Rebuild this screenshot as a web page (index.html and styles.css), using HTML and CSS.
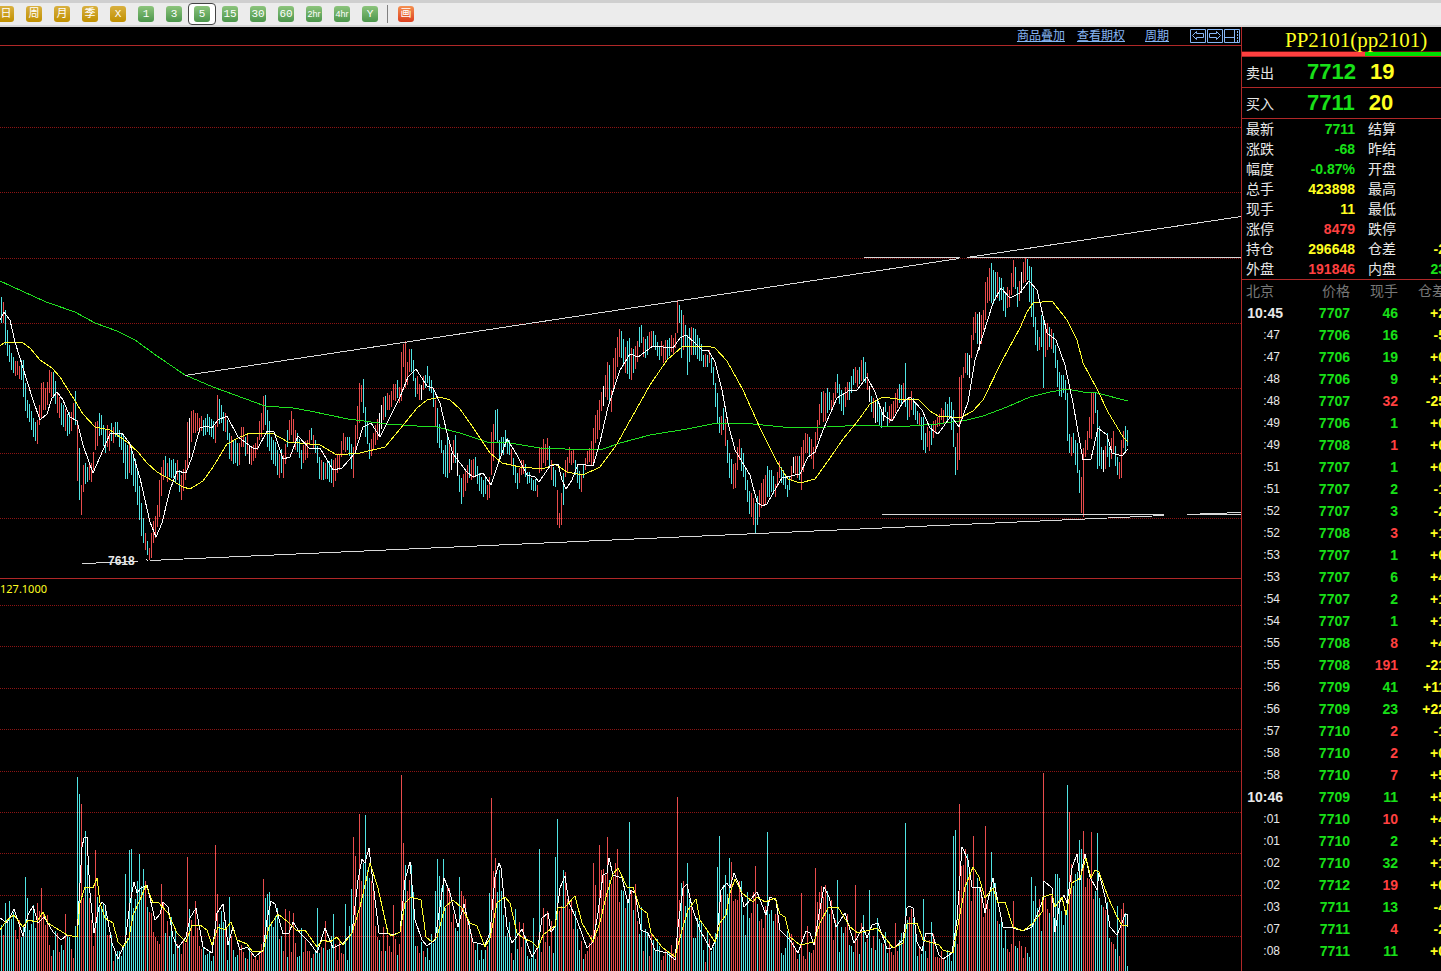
FILE: index.html
```html
<!DOCTYPE html>
<html lang="zh-CN">
<head>
    <meta charset="UTF-8">
    <meta name="viewport" content="width=device-width, initial-scale=1.0">
    <title>PP2101</title>
    <link rel="stylesheet" href="styles.css">
</head>
<body>
    <div class="toolbar">
        <button class="period gold"><span>日</span></button>
        <button class="period gold"><span>周</span></button>
        <button class="period gold"><span>月</span></button>
        <button class="period gold"><span>季</span></button>
        <button class="period gold"><span>X</span></button>
        <button class="period"><span>1</span></button>
        <button class="period"><span>3</span></button>
        <button class="period selected"><span>5</span></button>
        <button class="period"><span>15</span></button>
        <button class="period"><span>30</span></button>
        <button class="period"><span>60</span></button>
        <button class="period small"><span>2hr</span></button>
        <button class="period small"><span>4hr</span></button>
        <button class="period"><span>Y</span></button>
        <div class="separator"></div>
        <button class="period draw"><span>画</span></button>
    </div>

    <div class="main">
        <div class="charts">
            <div class="chart-header">
                <a href="#">商品叠加</a>
                <a href="#">查看期权</a>
                <a href="#" class="cycle">周期</a>
                <div class="window-buttons">
                    <button aria-label="左移"><svg width="17" height="14"><path d="M.5 .5h15v13H.5z M2.5 6.5l4-4v2h7v4h-7v2z"/></svg></button>
                    <button aria-label="右移"><svg width="17" height="14"><path d="M.5 .5h15v13H.5z M13.5 6.5l-4-4v2h-7v4h7v2z"/></svg></button>
                    <button aria-label="布局"><svg width="17" height="14"><path d="M.5 .5h15v13H.5z M1 8.5h10 M10.5 1v12"/><path d="M13.5 2v11" stroke-dasharray="2 1"/></svg></button>
                </div>
            </div>
            <svg class="price-chart" id="priceChart"></svg>
            <svg class="volume-chart" id="volumeChart"></svg>
        </div>

        <div class="quote">
            <div class="quote-title">PP2101(pp2101)</div>
            <div class="ratio"><div class="ratio-sell"></div></div>
            <div class="best"><span class="label">卖出</span><b class="green">7712</b><b class="yellow">19</b></div>
            <div class="best"><span class="label">买入</span><b class="green">7711</b><b class="yellow">20</b></div>

            <table class="stats">
                <tr><th>最新</th><td class="green">7711</td><th>结算</th><td></td></tr>
                <tr><th>涨跌</th><td class="green">-68</td><th>昨结</th><td></td></tr>
                <tr><th>幅度</th><td class="green">-0.87%</td><th>开盘</th><td></td></tr>
                <tr><th>总手</th><td class="yellow">423898</td><th>最高</th><td></td></tr>
                <tr><th>现手</th><td class="yellow">11</td><th>最低</th><td></td></tr>
                <tr><th>涨停</th><td class="red">8479</td><th>跌停</th><td></td></tr>
                <tr><th>持仓</th><td class="yellow">296648</td><th>仓差</th><td class="yellow">-2</td></tr>
                <tr><th>外盘</th><td class="red">191846</td><th>内盘</th><td class="green">23</td></tr>
            </table>

            <table class="ticks">
                <thead>
                    <tr><th>北京</th><th>价格</th><th>现手</th><th>仓差</th></tr>
                </thead>
                <tbody id="ticks"></tbody>
            </table>
        </div>
    </div>

    <script src="chart.js"></script>
</body>
</html>
```
FILE: styles.css
```css
:root {
    --line: #b02828;
    --red: #ff4040;
    --green: #18e018;
    --yellow: #ffff20;
    --link: #86b6f4;
}

* {
    margin: 0;
    padding: 0;
    box-sizing: border-box;
}

body {
    background-color: #000;
    color: #e8e8e8;
    font-family: 'Liberation Sans', 'Noto Sans CJK SC', sans-serif;
    height: 100vh;
    display: flex;
    flex-direction: column;
    overflow: hidden;
}

button {
    border: none;
    background: none;
    cursor: pointer;
}

.toolbar {
    flex: none;
    display: flex;
    align-items: center;
    height: 27px;
    margin-left: -8px;
    background-color: #ececec;
    border-top: 3px solid #cfcfcf;
    border-bottom: 2px solid #d6d6d6;
}

.period {
    flex: none;
    display: flex;
    align-items: center;
    justify-content: center;
    width: 28px;
    height: 22px;
}

.period span {
    width: 16px;
    height: 16px;
    border-radius: 3px;
    background: linear-gradient(#8cc47c, #4c964c);
    color: #fff;
    font: 11px/16px 'Liberation Mono', 'Noto Sans CJK SC', monospace;
    text-align: center;
}

.period.gold span {
    background: linear-gradient(#d8b040, #c09000);
}

.period.draw span {
    background: linear-gradient(#f49050, #dc4020);
}

.period.small span {
    font: 9px/16px 'Liberation Sans', sans-serif;
}

.period.selected {
    background-color: #fff;
    border: 1px solid #444;
    border-radius: 4px;
}

.separator {
    width: 1px;
    height: 18px;
    margin: 0 4px 0 3px;
    background-color: #808080;
}

.main {
    flex: 1;
    display: flex;
    min-height: 0;
}

.charts {
    flex: 1;
    min-width: 0;
    display: flex;
    flex-direction: column;
}

.chart-header {
    flex: none;
    display: flex;
    align-items: center;
    justify-content: flex-end;
    gap: 12px;
    height: 19px;
    border-bottom: 1px solid var(--line);
    font-size: 12px;
    line-height: 18px;
}

.chart-header a {
    color: var(--link);
}

.cycle {
    margin: 0 9px 0 8px;
}

.window-buttons {
    display: flex;
}

.window-buttons svg {
    display: block;
    fill: none;
    stroke: var(--link);
}

.price-chart {
    flex: 0 0 532px;
    width: 100%;
}

.volume-chart {
    flex: 1;
    width: 100%;
    min-height: 0;
    border-top: 1px solid var(--line);
}

.grid {
    stroke: #8c1414;
    stroke-dasharray: 1 1;
}

.up {
    stroke: #e84c4c;
}

.down {
    stroke: #50e4e4;
}

.flat {
    stroke: #fff;
}

.average {
    fill: none;
}

.average.white {
    stroke: #fff;
}

.average.yellow {
    stroke: #ffff30;
}

.average.green {
    stroke: #20e020;
}

.trend {
    stroke: #d8d8d8;
}

.low-mark {
    fill: #e8e8e8;
    font: bold 12px 'Liberation Sans', sans-serif;
}

.indicator {
    fill: #ffff20;
    font: 11px 'Noto Sans', sans-serif;
}

.quote {
    flex: 0 0 200px;
    border-left: 1px solid var(--line);
    overflow: hidden;
    font-size: 14px;
}

.quote-title {
    height: 24px;
    padding-left: 43px;
    color: var(--yellow);
    font: 21px/26px 'Liberation Serif', serif;
    white-space: nowrap;
}

.ratio {
    height: 6px;
    border-top: 1px solid #601010;
    border-bottom: 1px solid var(--line);
    background-color: #00e000;
}

.ratio-sell {
    width: 62%;
    height: 4px;
    background-color: var(--red);
}

.best {
    display: flex;
    align-items: center;
    gap: 14px;
    height: 31px;
    padding-left: 4px;
    border-bottom: 1px solid var(--line);
}

.best .label {
    width: 47px;
}

.best b {
    font-size: 22px;
}

.green {
    color: var(--green);
}

.yellow {
    color: var(--yellow);
}

.red {
    color: var(--red);
}

table {
    width: 204px;
    table-layout: fixed;
    border-collapse: collapse;
}

th {
    font-weight: normal;
}

td {
    font-weight: bold;
    text-align: right;
}

.stats th {
    width: 42px;
    padding-left: 4px;
    text-align: left;
}

.stats td:nth-child(2) {
    width: 71px;
}

.stats th:nth-child(3) {
    width: 50px;
    padding-left: 13px;
}

.stats tr {
    height: 20px;
    line-height: 20px;
}

.ticks {
    border-top: 1px solid var(--line);
}

.ticks tr {
    height: 22px;
    line-height: 22px;
}

.ticks th {
    width: 48px;
    color: #777;
    text-align: right;
}

.ticks th:first-child {
    width: 60px;
    padding-left: 4px;
    text-align: left;
}

.ticks td {
    color: var(--green);
}

.ticks td:first-child {
    padding-right: 22px;
    color: #e8e8e8;
    font-size: 12px;
    font-weight: normal;
}

.ticks td.minute {
    padding-right: 19px;
    font-size: 14px;
    font-weight: bold;
}

.ticks td.red {
    color: var(--red);
}

.ticks td:last-child {
    color: var(--yellow);
}
```
FILE: chart.js
```javascript
const SVG_NS = 'http://www.w3.org/2000/svg';
const PRICE_TOP = 46;
const VOLUME_TOP = 579;
const LAST_X = 1127;

// x,high,low
const candles = parse(`1,297,323 3,302,323 5,310,345 9,345,362 13,357,373 19,366,379 21,360,380 23,360,397 27,400,418 31,411,430
35,422,441 37,420,444 39,405,425 41,383,418 45,388,410 49,370,393 53,372,398 57,393,413 61,403,425 69,412,434 73,403,420
75,391,425 77,420,481 79,448,500 81,485,515 83,465,492 87,467,482 91,463,482 93,452,470 95,422,450 101,415,435 105,430,453
115,422,437 121,433,450 125,443,479 131,447,475 137,470,505 141,503,536 145,533,550 149,548,560 151,533,558 153,521,543
157,505,527 159,480,517 163,460,480 171,460,478 177,460,480 181,475,500 185,460,480 187,422,470 193,410,433 199,418,433
209,417,435 215,425,443 217,395,427 221,405,423 227,420,440 229,433,459 239,443,465 241,427,447 251,447,465 257,437,450
261,413,437 263,396,430 265,395,425 267,410,447 271,437,460 277,450,475 283,455,478 287,430,447 291,411,435 297,433,452
301,450,469 307,440,458 311,428,440 315,440,453 319,457,479 325,463,479 333,460,487 339,455,470 343,433,450 347,437,450
353,447,478 355,425,450 359,383,423 361,385,402 363,379,413 365,407,437 369,443,459 373,433,450 379,413,437 383,397,420
389,395,410 397,380,398 399,387,403 401,352,401 403,344,367 405,341,388 407,362,385 409,349,372 411,349,372 415,378,397
421,385,400 425,375,388 427,366,383 431,380,393 433,390,407 437,408,443 441,440,453 443,450,474 447,437,478 451,453,470
455,435,463 459,475,492 461,478,504 467,465,483 471,460,480 475,457,475 479,473,491 487,485,500 489,477,498 491,432,475
495,410,440 497,409,443 499,440,460 505,430,447 509,440,455 513,458,475 517,473,489 521,460,475 529,472,483 537,485,497
539,448,473 547,438,460 551,460,480 555,470,487 557,490,525 559,513,528 561,493,525 563,473,505 565,460,477 569,447,463
573,450,463 577,465,483 581,475,492 585,458,470 589,448,462 593,428,463 595,415,443 599,400,430 601,392,411 605,375,397
607,362,400 609,365,402 611,390,412 613,358,390 617,337,367 619,329,357 625,347,373 629,338,379 633,349,373 641,325,343
643,337,357 651,331,348 659,347,360 665,340,360 675,333,348 677,300,333 679,305,323 681,310,358 685,325,347 687,335,375
691,327,355 695,329,355 699,338,361 703,355,367 709,350,363 713,367,385 717,393,423 719,417,433 723,408,430 725,419,446
727,440,463 729,453,478 735,463,488 739,439,460 743,453,477 747,480,502 751,493,517 755,503,533 757,496,525 761,483,508
767,466,497 771,470,492 775,484,497 779,461,478 787,485,497 793,457,473 799,456,480 801,447,490 805,433,453 809,437,455
813,447,469 817,420,440 821,392,413 823,391,422 827,388,413 831,400,411 837,374,393 843,393,415 847,382,400 855,367,383
859,367,384 863,357,382 867,373,390 871,396,412 875,400,423 881,410,428 885,402,412 887,412,427 895,393,413 899,384,403
903,383,403 905,363,407 907,400,420 911,391,410 919,413,425 923,417,450 925,433,453 931,425,445 937,417,427 945,402,417
949,397,417 953,410,447 955,447,475 957,433,470 959,377,460 963,367,378 965,353,373 969,355,378 973,317,340 975,312,333
979,312,350 983,310,330 985,282,320 987,277,303 991,263,303 995,272,300 1001,278,300 1005,292,317 1009,290,307 1013,260,287
1015,267,289 1017,287,307 1023,262,283 1025,258,282 1027,259,280 1031,267,317 1035,317,345 1039,337,350 1041,315,347
1043,317,388 1045,323,357 1049,327,347 1053,333,353 1057,360,387 1061,375,397 1063,375,393 1065,380,400 1067,393,441
1069,434,453 1073,433,453 1077,443,473 1079,470,493 1081,477,513 1083,448,517 1085,440,457 1089,417,438 1091,393,439
1093,393,424 1095,392,413 1097,410,469 1101,447,469 1103,450,472 1107,433,457 1109,447,467 1113,431,453 1117,457,475
1119,462,479 1121,440,478 1123,431,448 1125,426,453 1127,430,446`);

const ma5 = `0,320 4,312 10,320 15,342 23,368 33,400 40,420 47,414 52,398 57,392 63,400 70,417 77,421 83,445 93,473 100,457
110,434 122,433 130,444 140,478 150,522 156,537 162,523 170,490 177,471 186,473 192,457 200,428 206,426 212,428 218,420
227,416 238,437 253,448 258,448 267,431 274,432 283,459 290,457 298,436 310,449 320,448 333,470 342,468 355,453 363,427
371,423 380,437 387,423 400,397 408,377 416,369 427,386 433,388 440,403 447,433 453,454 467,472 473,477 483,473 491,485
497,467 507,439 517,455 527,475 535,477 539,482 550,466 558,464 562,480 566,489 572,480 578,464 593,466 600,442 608,407
620,370 630,354 638,357 653,346 673,348 680,338 686,335 695,343 702,350 708,350 715,362 722,390 728,423 735,450 750,475
757,502 762,506 767,504 773,493 782,478 800,474 808,457 815,452 823,430 837,398 850,390 857,390 867,377 875,392 883,415
892,421 903,402 910,397 922,410 930,428 938,434 951,416 959,427 968,402 975,360 983,335 993,303 1001,288 1010,298
1020,293 1029,281 1037,290 1047,333 1056,340 1065,365 1073,403 1083,460 1091,459 1098,428 1107,435 1112,453 1122,456 1128,449`;

const ma20 = `0,346 5,342 23,343 30,348 40,360 52,368 60,377 72,396 83,414 95,427 110,430 127,442 138,452 147,463 157,472
173,481 183,487 190,489 203,481 213,467 227,444 238,438 250,433 272,433 288,442 300,443 320,445 337,455 360,453 385,447
400,429 417,408 427,400 440,397 450,400 460,409 472,426 490,453 502,463 520,467 543,469 555,464 567,472 583,475 600,467
617,444 632,417 650,385 667,360 682,347 707,346 715,348 727,361 743,390 760,428 777,462 788,479 800,483 815,479 830,458
843,439 857,422 870,404 883,397 897,399 918,399 930,411 938,416 960,418 973,411 983,400 1002,361 1020,328 1027,312
1033,303 1052,301 1067,320 1077,340 1083,363 1097,389 1108,412 1123,437 1128,442`;

const ma60 = `0,281 46,302 75,312 95,323 117,331 135,340 157,356 185,375 213,387 265,406 293,408 310,411 348,419 387,424
417,426 437,427 460,433 487,442 510,443 540,448 590,450 603,449 620,443 650,435 687,429 717,423 743,423 793,428 827,427
863,425 897,427 937,424 967,420 983,416 1007,407 1030,397 1050,392 1067,389 1083,392 1097,393 1128,401`;

const volumeFast = `0,918 7,923 14,909 23,936 28,915 33,906 38,923 44,917 53,932 61,940 67,935 77,937 82,847 84,838 87,837
90,893 94,933 99,907 102,902 105,905 112,943 118,959 125,943 130,903 134,882 137,893 141,888 147,885 155,920 160,914
163,902 168,907 173,937 178,948 186,937 190,918 196,908 203,947 212,953 217,913 223,904 228,945 233,927 240,950 247,947
255,957 263,950 267,920 271,901 275,904 283,934 289,933 293,922 300,933 310,943 317,953 325,928 333,948 343,943 352,933
358,880 362,859 365,863 369,848 373,883 379,933 387,933 393,935 400,932 405,880 410,862 415,920 422,940 427,946 435,940
440,907 444,878 450,893 458,927 464,904 473,942 485,945 490,933 495,877 499,863 501,868 507,927 512,943 522,929 532,957
538,947 542,918 548,913 551,932 555,927 560,888 565,876 569,903 577,920 587,948 593,942 598,913 603,875 607,873 609,858
613,875 622,878 628,903 631,890 635,893 641,930 648,933 655,950 667,953 675,960 678,927 683,888 687,884 692,907 700,930
711,950 717,937 721,890 727,883 730,888 734,873 740,887 744,907 757,892 766,915 770,897 776,900 780,930 790,940 798,953
806,931 810,933 814,945 818,920 824,887 829,897 836,927 845,913 854,943 863,927 867,938 872,925 878,923 887,949 895,947
903,940 907,908 909,906 913,908 917,942 922,951 926,933 932,933 939,955 943,959 952,953 957,920 962,847 968,860 972,887
980,887 985,913 993,878 997,897 1003,927 1013,928 1023,931 1032,927 1043,900 1044,881 1052,888 1055,932 1060,902
1064,895 1067,903 1072,868 1077,854 1080,880 1085,854 1090,877 1097,890 1099,873 1105,897 1110,927 1117,935 1122,923
1125,914 1127,914 1128,927`;

const volumeSlow = `0,930 7,920 14,915 23,927 28,920 37,922 43,912 48,923 67,935 77,937 80,903 85,887 93,888 97,878 100,903
105,918 113,923 118,942 123,947 129,938 133,915 140,900 146,885 153,903 158,902 168,913 177,933 186,942 192,925 200,925
207,930 212,945 218,927 225,930 231,922 237,940 247,944 253,952 263,951 269,927 278,914 288,922 297,931 305,930 317,947
323,940 330,942 337,937 343,945 352,933 360,907 370,863 378,888 388,933 392,936 400,932 405,903 411,897 421,900 426,937
432,942 437,937 445,907 453,900 462,908 470,923 477,926 485,947 490,938 497,903 505,897 510,903 517,933 523,938 532,942
538,948 543,935 555,926 558,908 565,907 575,896 582,923 593,942 600,922 607,893 613,874 618,868 627,887 633,887 640,908
647,913 651,933 662,947 675,957 682,930 688,910 696,899 700,920 707,930 715,942 720,923 726,915 730,893 735,879 742,893
753,902 757,897 765,902 775,898 780,914 785,917 790,937 800,945 814,942 820,923 828,908 838,907 850,927 858,933 870,930
877,928 887,940 893,948 903,943 907,924 917,923 923,940 939,945 943,950 953,953 957,930 965,887 973,867 979,877 985,898
993,888 998,903 1005,902 1013,927 1023,931 1033,923 1042,912 1043,897 1052,894 1055,907 1062,897 1066,915 1072,883
1080,878 1086,858 1091,878 1095,870 1099,872 1108,897 1117,917 1122,925 1128,926`;

// x,top of the tallest volume bars, split by direction
const peaksDown = parse(`5,903 9,901 25,877 27,898 77,777 79,794 97,897 125,874 129,850 131,849 139,854 143,869 189,909 229,897
265,898 267,894 269,892 317,908 333,914 345,904 351,889 365,815 363,863 367,870 369,878 405,865 435,891 437,859 439,876
443,859 459,877 489,893 515,909 533,918 539,849 555,857 557,819 629,822 641,907 681,883 687,863 717,867 719,836 725,875
729,858 767,832 837,880 869,890 905,823 923,899 953,836 955,830 991,852 1031,877 1033,901 1035,886 1055,874 1057,874
1059,878 1067,785 1079,840 1081,849 1097,833 1117,906 1127,966`);
const peaksUp = parse(`37,903 41,888 65,914 81,804 83,898 95,850 161,884 187,857 215,845 217,894 263,879 285,909 289,911 353,837
355,856 359,814 361,881 393,905 401,775 403,843 447,887 461,891 491,798 493,871 495,858 593,863 595,885 599,845 601,870
603,869 607,837 611,884 615,863 617,849 677,797 679,900 691,904 731,862 755,866 801,893 815,868 817,902 819,892 821,886
855,885 895,923 959,804 961,866 963,865 965,849 973,836 985,826 1013,901 1043,773 1069,812 1083,831 1085,887 1091,832
1103,907 1121,909 1123,903`);

const trendLines = [
    [185, 375, 959, 258], [967, 257, 1241, 216],
    [864, 257, 960, 257], [967, 257, '100%', 257],
    [882, 514, 1164, 514], [1187, 514, '100%', 514],
    [150, 560, 1164, 515], [1187, 514, 1241, 512],
    [82, 563, 138, 561]
];

// time, price, lots, colour of lots, change in open interest
const ticks = [
    ['10:45', 7707, 46, 'green', '+2'], [':47', 7706, 16, 'green', '-5'], [':47', 7706, 19, 'green', '+0'],
    [':48', 7706, 9, 'green', '+1'], [':48', 7707, 32, 'red', '-25'], [':49', 7706, 1, 'green', '+0'],
    [':49', 7708, 1, 'red', '+0'], [':51', 7707, 1, 'green', '+0'], [':51', 7707, 2, 'green', '-1'],
    [':52', 7707, 3, 'green', '-2'], [':52', 7708, 3, 'red', '+1'], [':53', 7707, 1, 'green', '+0'],
    [':53', 7707, 6, 'green', '+4'], [':54', 7707, 2, 'green', '+1'], [':54', 7707, 1, 'green', '+1'],
    [':55', 7708, 8, 'red', '+4'], [':55', 7708, 191, 'red', '-21'], [':56', 7709, 41, 'green', '+11'],
    [':56', 7709, 23, 'green', '+22'], [':57', 7710, 2, 'red', '-1'], [':58', 7710, 2, 'red', '+0'],
    [':58', 7710, 7, 'red', '+5'], ['10:46', 7709, 11, 'green', '+5'], [':01', 7710, 10, 'red', '+4'],
    [':01', 7710, 2, 'green', '+1'], [':02', 7710, 32, 'green', '+1'], [':02', 7712, 19, 'red', '+0'],
    [':03', 7711, 13, 'green', '-4'], [':07', 7711, 4, 'red', '-2'], [':08', 7711, 11, 'green', '+0']
];

let seed = 7;
function random() {
    seed = (seed * 16807) % 2147483647;
    return seed / 2147483647;
}

function parse(text) {
    return text.trim().split(/\s+/).map(p => p.split(',').map(Number));
}

function valueAt(points, x, column) {
    const next = points.findIndex(p => p[0] >= x);
    if (next < 0) return points[points.length - 1][column];
    const b = points[next];
    const a = points[Math.max(0, next - 1)];
    if (a[0] === b[0]) return b[column];
    return a[column] + (b[column] - a[column]) * (x - a[0]) / (b[0] - a[0]);
}

function add(parent, name, attributes) {
    const node = document.createElementNS(SVG_NS, name);
    Object.keys(attributes).forEach(key => node.setAttribute(key, attributes[key]));
    parent.appendChild(node);
    return node;
}

function addLine(parent, className, x1, y1, x2, y2) {
    return add(parent, 'line', { class: className, x1, y1, x2, y2, 'shape-rendering': 'crispEdges' });
}

function addAverage(parent, colour, text, top) {
    const points = parse(text).map(p => p[0] + ',' + (p[1] - top)).join(' ');
    add(parent, 'polyline', { class: 'average ' + colour, points, 'shape-rendering': 'crispEdges' });
}

function addText(parent, className, x, y, text) {
    add(parent, 'text', { class: className, x, y }).textContent = text;
}

function directionAt(x) {
    const before = valueAt(candles, Math.max(1, x - 2), 1) + valueAt(candles, Math.max(1, x - 2), 2);
    const after = valueAt(candles, x + 2, 1) + valueAt(candles, x + 2, 2);
    const chance = Math.min(0.88, Math.max(0.12, 0.5 + (after - before) / 50));
    return random() < chance ? 'down' : 'up';
}

function drawPrice(directions) {
    const svg = document.getElementById('priceChart');
    [127, 192, 258, 323, 388, 453, 518].forEach(y => {
        addLine(svg, 'grid', 0, y - PRICE_TOP + 0.5, '100%', y - PRICE_TOP + 0.5);
    });
    for (let x = 1; x <= LAST_X; x += 2) {
        const known = candles.some(c => c[0] === x);
        const shift = known ? 0 : Math.round(random() * 8 - 4);
        const high = valueAt(candles, x, 1) + shift - PRICE_TOP;
        const low = valueAt(candles, x, 2) + shift - PRICE_TOP;
        const flat = random() < 0.02;
        addLine(svg, flat ? 'flat' : directions[x], x + 0.5, high, x + 0.5, low);
    }
    addAverage(svg, 'green', ma60, PRICE_TOP);
    addAverage(svg, 'yellow', ma20, PRICE_TOP);
    addAverage(svg, 'white', ma5, PRICE_TOP);
    trendLines.forEach(l => addLine(svg, 'trend', l[0], l[1] - PRICE_TOP + 0.5, l[2], l[3] - PRICE_TOP + 0.5));
    addText(svg, 'low-mark', 108, 565 - PRICE_TOP, '7618');
    addLine(svg, 'flat', 146, 559 - PRICE_TOP, 148, 561 - PRICE_TOP);
}

function drawVolume(directions) {
    const svg = document.getElementById('volumeChart');
    const base = parse(volumeFast);
    [605, 646, 688, 729, 771, 812, 853, 895, 936].forEach(y => {
        addLine(svg, 'grid', 0, y - VOLUME_TOP + 0.5, '100%', y - VOLUME_TOP + 0.5);
    });
    for (let x = 1; x <= LAST_X; x += 2) {
        const down = peaksDown.find(p => p[0] === x);
        const up = peaksUp.find(p => p[0] === x);
        const peak = down || up;
        const className = down ? 'down' : up ? 'up' : directions[x];
        const spread = random() * 42 - 12;
        const top = peak ? peak[1] : Math.min(950 + random() * 12, valueAt(base, x, 1) + spread);
        addLine(svg, className, x + 0.5, top - VOLUME_TOP, x + 0.5, '100%');
    }
    addAverage(svg, 'white', volumeFast, VOLUME_TOP);
    addAverage(svg, 'yellow', volumeSlow, VOLUME_TOP);
    addText(svg, 'indicator', 0, 593 - VOLUME_TOP, '127.1000');
}

function renderTicks() {
    document.getElementById('ticks').innerHTML = ticks.map(t => `
        <tr>
            <td class="${t[0].length > 3 ? 'minute' : ''}">${t[0]}</td>
            <td>${t[1]}</td>
            <td class="${t[3]}">${t[2]}</td>
            <td>${t[4]}</td>
        </tr>`).join('');
}

const directions = {};
for (let x = 1; x <= LAST_X; x += 2) {
    directions[x] = directionAt(x);
}
drawPrice(directions);
drawVolume(directions);
renderTicks();
```
